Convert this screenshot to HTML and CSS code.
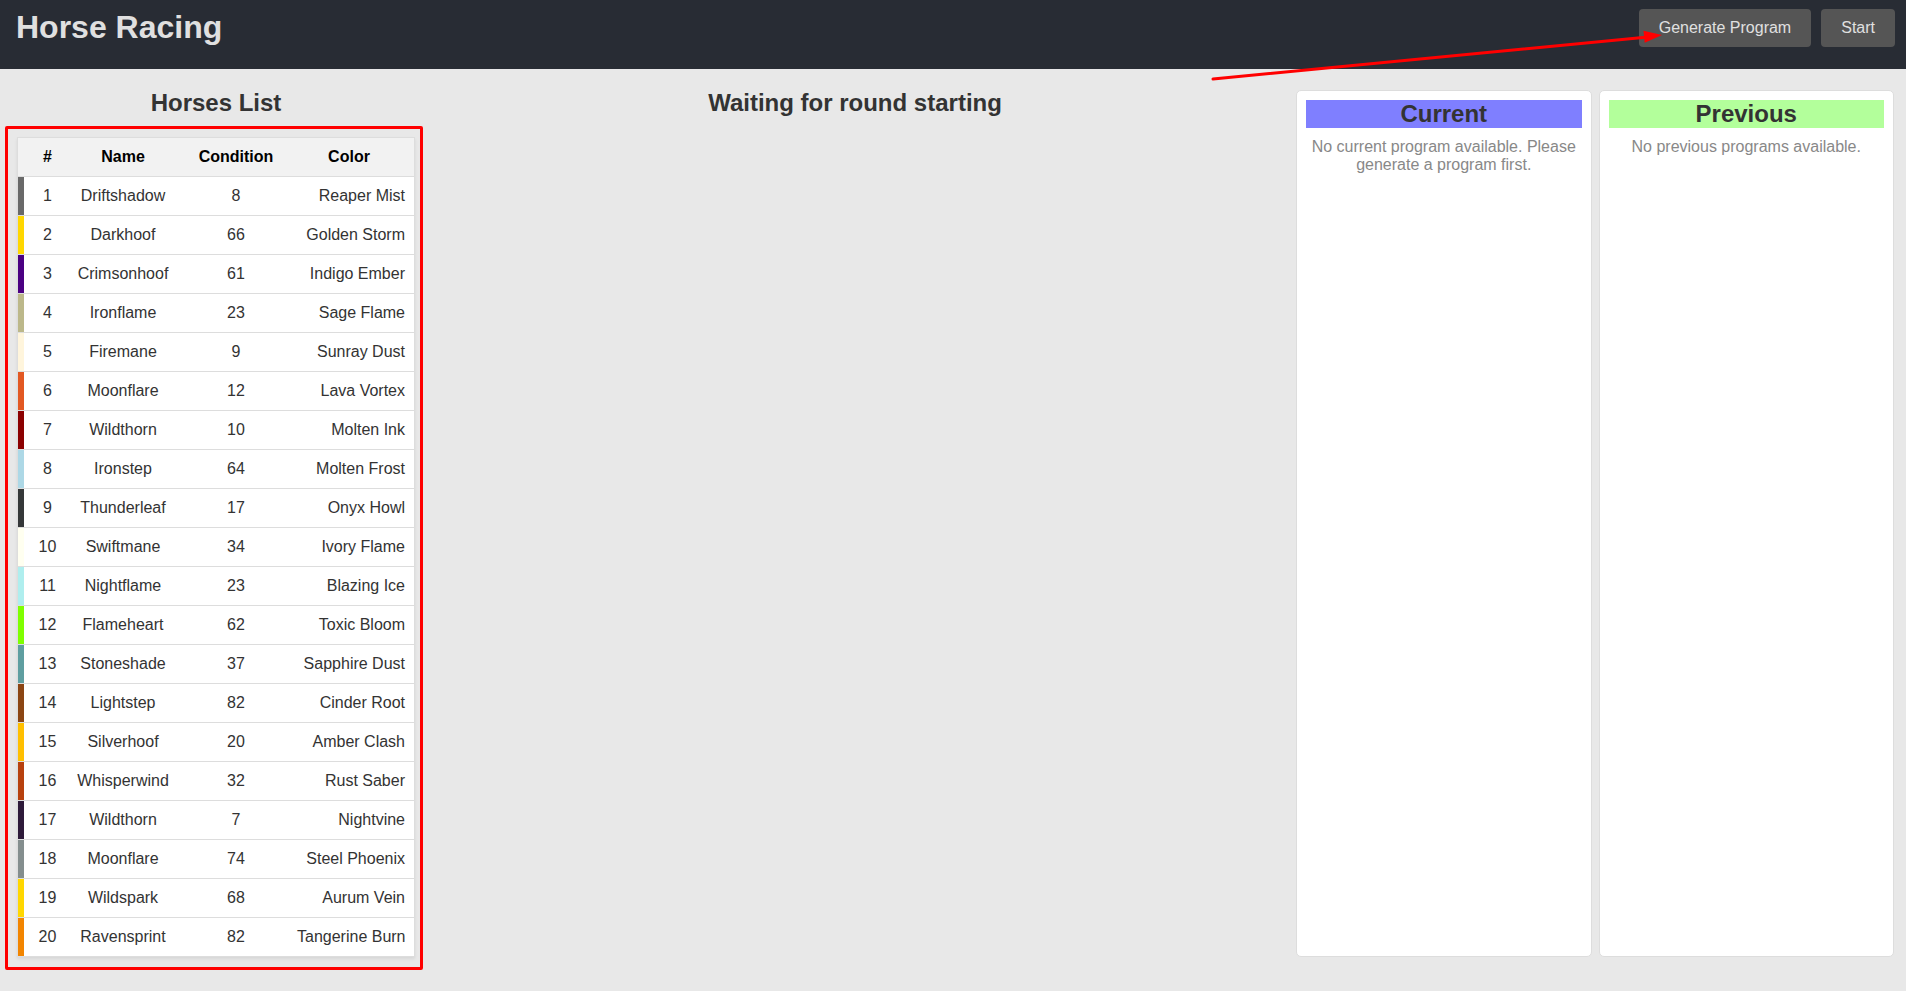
FILE: index.html
```html
<!DOCTYPE html>
<html lang="en">
<head>
<meta charset="utf-8">
<title>Horse Racing</title>
<link rel="stylesheet" href="styles.css">
</head>
<body>
<header class="topbar">
  <h1 class="app-title">Horse Racing</h1>
  <div class="actions">
    <button class="btn">Generate Program</button>
    <button class="btn">Start</button>
  </div>
</header>

<main class="content">
  <section class="horses">
    <h2 class="section-title">Horses List</h2>
    <div class="table-wrap">
      <table class="horse-table">
        <colgroup>
          <col class="c-num"><col class="c-name"><col class="c-cond"><col class="c-color">
        </colgroup>
        <thead>
          <tr><th class="num">#</th><th>Name</th><th>Condition</th><th class="color-h">Color</th></tr>
        </thead>
        <tbody>
          <tr><td class="num" style="--c:#696969">1</td><td>Driftshadow</td><td>8</td><td class="color">Reaper Mist</td></tr>
          <tr><td class="num" style="--c:#ffd700">2</td><td>Darkhoof</td><td>66</td><td class="color">Golden Storm</td></tr>
          <tr><td class="num" style="--c:#4b0082">3</td><td>Crimsonhoof</td><td>61</td><td class="color">Indigo Ember</td></tr>
          <tr><td class="num" style="--c:#bcb88a">4</td><td>Ironflame</td><td>23</td><td class="color">Sage Flame</td></tr>
          <tr><td class="num" style="--c:#fff5dc">5</td><td>Firemane</td><td>9</td><td class="color">Sunray Dust</td></tr>
          <tr><td class="num" style="--c:#e25822">6</td><td>Moonflare</td><td>12</td><td class="color">Lava Vortex</td></tr>
          <tr><td class="num" style="--c:#8b0000">7</td><td>Wildthorn</td><td>10</td><td class="color">Molten Ink</td></tr>
          <tr><td class="num" style="--c:#add8e6">8</td><td>Ironstep</td><td>64</td><td class="color">Molten Frost</td></tr>
          <tr><td class="num" style="--c:#353839">9</td><td>Thunderleaf</td><td>17</td><td class="color">Onyx Howl</td></tr>
          <tr><td class="num" style="--c:#fffff0">10</td><td>Swiftmane</td><td>34</td><td class="color">Ivory Flame</td></tr>
          <tr><td class="num" style="--c:#afeeee">11</td><td>Nightflame</td><td>23</td><td class="color">Blazing Ice</td></tr>
          <tr><td class="num" style="--c:#7fff00">12</td><td>Flameheart</td><td>62</td><td class="color">Toxic Bloom</td></tr>
          <tr><td class="num" style="--c:#5f9ea0">13</td><td>Stoneshade</td><td>37</td><td class="color">Sapphire Dust</td></tr>
          <tr><td class="num" style="--c:#8b4513">14</td><td>Lightstep</td><td>82</td><td class="color">Cinder Root</td></tr>
          <tr><td class="num" style="--c:#ffbf00">15</td><td>Silverhoof</td><td>20</td><td class="color">Amber Clash</td></tr>
          <tr><td class="num" style="--c:#b7410e">16</td><td>Whisperwind</td><td>32</td><td class="color">Rust Saber</td></tr>
          <tr><td class="num" style="--c:#2e1a3a">17</td><td>Wildthorn</td><td>7</td><td class="color">Nightvine</td></tr>
          <tr><td class="num" style="--c:#848e8e">18</td><td>Moonflare</td><td>74</td><td class="color">Steel Phoenix</td></tr>
          <tr><td class="num" style="--c:#ffd700">19</td><td>Wildspark</td><td>68</td><td class="color">Aurum Vein</td></tr>
          <tr><td class="num" style="--c:#f28500">20</td><td>Ravensprint</td><td>82</td><td class="color">Tangerine Burn</td></tr>
        </tbody>
      </table>
    </div>
  </section>

  <section class="race">
    <h2 class="section-title">Waiting for round starting</h2>
  </section>

  <section class="programs">
    <div class="card">
      <h3 class="card-title current">Current</h3>
      <p class="card-text">No current program available. Please generate a program first.</p>
    </div>
    <div class="card">
      <h3 class="card-title previous">Previous</h3>
      <p class="card-text">No previous programs available.</p>
    </div>
  </section>
</main>

<div class="annot-box"></div>
<svg class="annot-arrow" width="1906" height="991" viewBox="0 0 1906 991">
  <line x1="1213" y1="79" x2="1648" y2="37" stroke="#ff0000" stroke-width="3" stroke-linecap="round"/>
  <polygon points="1662,35 1644.7,42.7 1643.5,30.8" fill="#ff0000"/>
</svg>
</body>
</html>
```

FILE: styles.css
```css
* { box-sizing: border-box; }

html, body {
  margin: 0;
  padding: 0;
}

body {
  background: #e8e8e8;
  font-family: "Liberation Sans", Arial, sans-serif;
  color: #333;
  min-height: 991px;
  position: relative;
}

.topbar {
  height: 69px;
  background: #282c34;
  display: flex;
  justify-content: space-between;
  align-items: flex-start;
  padding: 0 11px 0 16px;
}

.app-title {
  margin: 9px 0 0;
  font-size: 32px;
  font-weight: bold;
  line-height: normal;
  color: #e0e0e0;
}

.actions {
  display: flex;
  gap: 10px;
  padding-top: 9px;
}

.btn {
  font-family: "Liberation Sans", Arial, sans-serif;
  font-size: 16px;
  line-height: 18px;
  padding: 10px 20px;
  background: #555;
  color: #e0e0e0;
  border: none;
  border-radius: 4px;
}

.content {
  display: flex;
  align-items: stretch;
  padding: 20px 12px 0 12px;
}

.horses {
  width: 408px;
  padding: 0 5px;
}

.section-title {
  margin: 0 0 20px;
  font-size: 24px;
  font-weight: bold;
  line-height: normal;
  text-align: center;
  color: #333;
}

.table-wrap {
  border: 1px solid #ddd;
  background: #fff;
  box-shadow: 0 2px 3px rgba(0,0,0,0.08);
}

.horse-table {
  width: 100%;
  border-collapse: separate;
  border-spacing: 0;
  table-layout: fixed;
  font-size: 16px;
}

.c-num { width: 53px; }
.c-name { width: 104px; }
.c-cond { width: 122px; }
.c-color { width: 117px; }

.horse-table th,
.horse-table td {
  padding: 10px 0;
  line-height: 18px;
  text-align: center;
  border-bottom: 1px solid #ddd;
  white-space: nowrap;
}

.horse-table th {
  background: #f2f2f2;
  color: #000;
  font-weight: bold;
}

.horse-table td {
  color: #333;
}

.horse-table th.num,
.horse-table td.num {
  padding-left: 6px;
}

.horse-table td.num {
  box-shadow: inset 6px 0 0 var(--c);
}

.horse-table th.color-h {
  padding-right: 13px;
}

.horse-table td.color {
  text-align: right;
  padding-right: 9px;
}

.horse-table tbody tr:last-child td {
  border-bottom: none;
}

.race {
  flex: 1;
}

.programs {
  width: 598px;
  margin-left: 6px;
  padding-top: 1px;
  display: grid;
  grid-template-columns: 1fr 1fr;
  gap: 7px;
}

.card {
  background: #fff;
  border: 1px solid #ddd;
  border-radius: 5px;
  padding: 9px;
}

.card-title {
  margin: 0;
  font-size: 24px;
  font-weight: bold;
  line-height: 28px;
  text-align: center;
  color: #333;
}

.card-title.current { background: #7f7fff; }
.card-title.previous { background: #b3ff9b; }

.card-text {
  margin: 10px 0 0;
  font-size: 16px;
  line-height: normal;
  text-align: center;
  color: #888;
}

.annot-box {
  position: absolute;
  left: 5px;
  top: 126px;
  width: 418px;
  height: 844px;
  border: 3px solid #ff0000;
  border-radius: 2px;
  pointer-events: none;
}

.annot-arrow {
  position: absolute;
  left: 0;
  top: 0;
  pointer-events: none;
}
```
